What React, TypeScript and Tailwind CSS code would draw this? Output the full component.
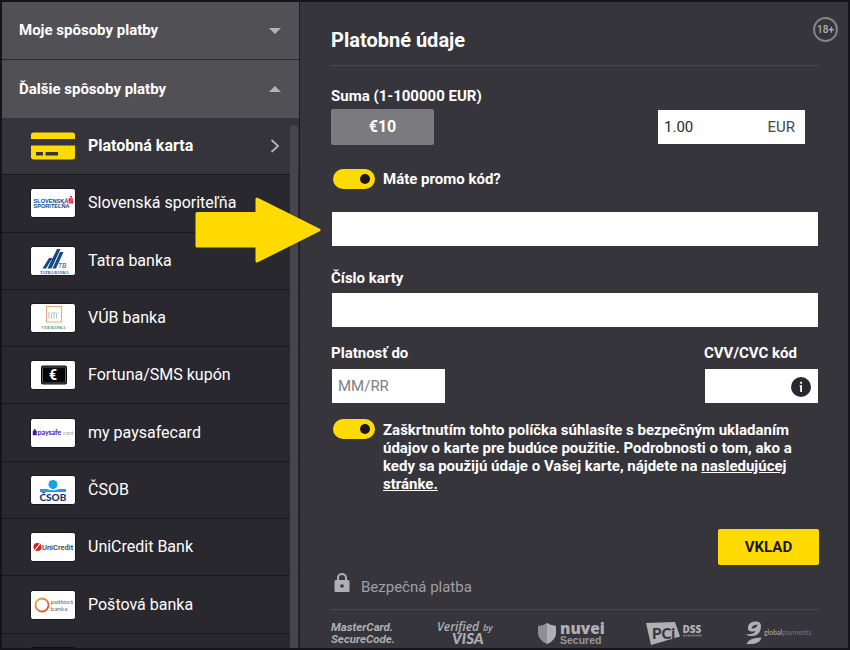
import { useState } from 'react'
import type { ReactNode } from 'react'
import { clsx } from 'clsx'

type Method = {
  id: string
  name: string
  logo: ReactNode
}

const METHODS: Method[] = [
  { id: 'card', name: 'Platobná karta', logo: <CardLogo /> },
  { id: 'slsp', name: 'Slovenská sporiteľňa', logo: <SlspLogo /> },
  { id: 'tatra', name: 'Tatra banka', logo: <TatraLogo /> },
  { id: 'vub', name: 'VÚB banka', logo: <VubLogo /> },
  { id: 'coupon', name: 'Fortuna/SMS kupón', logo: <CouponLogo /> },
  { id: 'paysafe', name: 'my paysafecard', logo: <PaysafeLogo /> },
  { id: 'csob', name: 'ČSOB', logo: <CsobLogo /> },
  { id: 'unicredit', name: 'UniCredit Bank', logo: <UniCreditLogo /> },
  { id: 'postova', name: 'Poštová banka', logo: <PostovaLogo /> },
  { id: 'more', name: '', logo: <EmptyLogo /> },
]

export default function App() {
  return (
    <div className="relative flex h-screen overflow-hidden border-2 border-[#15141a] bg-[#36353b] font-['Roboto','Liberation_Sans',sans-serif] text-white">
      <Sidebar />
      <PaymentForm />
      <Arrow />
    </div>
  )
}

function Sidebar() {
  const [selected, setSelected] = useState('card')

  return (
    <aside className="flex w-[298px] shrink-0 flex-col border-r border-[#1b1a20] bg-[#29282e]">
      <GroupHeader title="Moje spôsoby platby" />
      <GroupHeader title="Ďalšie spôsoby platby" open />
      <div className="relative min-h-0 flex-1 overflow-hidden">
        <ul className="grid min-h-[573px] auto-rows-fr">
          {METHODS.map((m) => (
            <li key={m.id} className="border-b border-[#19181e]">
              <button
                onClick={() => setSelected(m.id)}
                className={clsx(
                  'flex h-full w-full items-center gap-3 pr-[19px] pl-7 text-left text-base',
                  selected === m.id ? 'bg-[#35343a] font-bold' : 'font-normal'
                )}
              >
                {m.logo}
                <span className="flex-1">{m.name}</span>
                {selected === m.id && (
                  <svg viewBox="0 0 10 14" className="h-[14px] w-[10px]" aria-hidden="true">
                    <path d="M1.5 1 8 7l-6.5 6" fill="none" stroke="#b5b4b8" strokeWidth="1.8" />
                  </svg>
                )}
              </button>
            </li>
          ))}
        </ul>
        {/* Scrollbar thumb */}
        <div className="absolute top-[7px] right-px bottom-0 w-2 rounded-t bg-[#46454b]" />
      </div>
    </aside>
  )
}

function GroupHeader({ title, open = false }: { title: string; open?: boolean }) {
  return (
    <button
      aria-expanded={open}
      className={clsx(
        'flex h-[58px] shrink-0 items-center justify-between bg-[#515055] pr-[18px] pl-[17px] text-left text-[15px] font-bold',
        !open && 'border-b border-[#29282e]'
      )}
    >
      {title}
      <svg viewBox="0 0 12 6" className="h-[6px] w-[12px]" aria-hidden="true">
        <path d={open ? 'M0 6 6 0l6 6z' : 'M0 0h12L6 6z'} fill="#b3b2b7" />
      </svg>
    </button>
  )
}

function PaymentForm() {
  return (
    <main className="relative min-w-0 flex-1 pr-[29px] pl-[31px] text-[15px] font-bold">
      <span className="absolute top-[15px] right-[10px] flex size-[25px] items-center justify-center rounded-full border-2 border-[#858489] text-[10px] font-medium text-[#b5b4b8]">
        18+
      </span>

      <h1 className="flex h-16 items-center border-b border-[#4c4b50] pt-3 text-xl">
        Platobné údaje
      </h1>

      <form onSubmit={(e) => e.preventDefault()}>
        <label htmlFor="amount" className="mt-5 block leading-5">
          Suma (1-100000 EUR)
        </label>
        <div className="mt-[3px] flex items-center justify-between pr-[14px]">
          <button type="button" className="h-9 w-[103px] rounded-xs bg-[#7b7a7e] text-base">
            €10
          </button>
          <div className="flex h-[34px] w-[147px] items-center bg-white pr-[10px] font-normal text-[#29282e]">
            <input
              id="amount"
              defaultValue="1.00"
              className="h-full min-w-0 flex-1 px-[6px] outline-none"
            />
            <span className="text-[#46454b]">EUR</span>
          </div>
        </div>

        <div className="mt-6 flex items-center gap-2 pl-[2px]">
          <Toggle id="promo" />
          <label htmlFor="promo" className="leading-5">
            Máte promo kód?
          </label>
        </div>
        <div className="mt-[23px] px-px">
          <TextBox id="promo-code" label="Promo kód" />
        </div>

        <label htmlFor="card-number" className="mt-[22px] block leading-5">
          Číslo karty
        </label>
        <div className="mt-[5px] px-px">
          <TextBox id="card-number" />
        </div>

        <div className="mt-4 flex justify-between pr-px">
          <div className="w-[114px]">
            <label htmlFor="expiry" className="block leading-5">
              Platnosť do
            </label>
            <div className="mt-[6px] pl-px">
              <TextBox id="expiry" placeholder="MM/RR" />
            </div>
          </div>
          <div className="w-[114px]">
            <label htmlFor="cvv" className="block leading-5">
              CVV/CVC kód
            </label>
            <div className="relative mt-[6px] pl-px">
              <TextBox id="cvv" />
              <svg
                viewBox="0 0 20 20"
                className="absolute top-2 right-[7px] size-5"
                aria-hidden="true"
              >
                <circle cx="10" cy="10" r="10" fill="#29282e" />
                <path d="M9.2 4.8H11v2H9.2zM8.6 8.3H11V15H9.200V9.600h-.6z" fill="#fff" />
              </svg>
            </div>
          </div>
        </div>

        <div className="mt-4 flex items-start gap-2 pl-[2px]">
          <Toggle id="consent" />
          <p className="flex-1 pt-[2px] leading-[18px]">
            <label htmlFor="consent">
              Zaškrtnutím tohto políčka súhlasíte s bezpečným ukladaním údajov o karte pre budúce
              použitie. Podrobnosti o tom, ako a kedy sa použijú údaje o Vašej karte, nájdete na{' '}
            </label>
            <a href="#storage" className="underline">
              nasledujúcej stránke.
            </a>
          </p>
        </div>

        <div className="mt-9 flex justify-end">
          <button
            type="submit"
            className="h-9 w-[101px] rounded-xs bg-[#ffdb01] text-[#19181e]"
          >
            VKLAD
          </button>
        </div>
      </form>

      <div className="mt-2 flex h-6 gap-[11px] pl-[3px] font-normal text-[#a09fa4]">
        <svg viewBox="0 0 16 20" className="h-5 w-4" aria-hidden="true">
          <path d="M4 8V5a4 4 0 0 1 8 0v3" fill="none" stroke="#b0afb3" strokeWidth="2" />
          <rect x="0.5" y="7" width="15" height="12" rx="1.5" fill="#b0afb3" />
          <circle cx="8" cy="13" r="1.8" fill="#36353b" />
        </svg>
        <span className="self-end leading-5">Bezpečná platba</span>
      </div>

      <footer className="mt-3 flex justify-between border-t border-[#4c4b50] pt-[10px]">
        <MasterCardMark />
        <VisaMark />
        <NuveiMark />
        <PciMark />
        <GlobalPaymentsMark />
      </footer>
    </main>
  )
}

function TextBox({
  id,
  label,
  placeholder,
}: {
  id: string
  label?: string
  placeholder?: string
}) {
  return (
    <input
      id={id}
      aria-label={label}
      placeholder={placeholder}
      className="block h-[34px] w-full bg-white px-[6px] font-normal text-[#29282e] outline-none placeholder:text-[#808080]"
    />
  )
}

function Toggle({ id }: { id: string }) {
  return (
    <input
      id={id}
      type="checkbox"
      defaultChecked
      className="flex h-5 w-[42px] shrink-0 appearance-none items-center rounded-full bg-[#7b7a7e] px-[5px] after:size-[10px] after:rounded-full after:bg-[#19181e] after:content-[''] checked:justify-end checked:bg-[#ffdb01]"
    />
  )
}

// Yellow pointer towards the promo code field
function Arrow() {
  return (
    <svg
      viewBox="0 0 126 66"
      className="pointer-events-none absolute top-[195px] left-[193px] h-[66px] w-[126px]"
      aria-hidden="true"
    >
      <path
        d="M2 16.500h60V2l62 31L62 64V49H2z"
        fill="#ffdb01"
        stroke="#ffdb01"
        strokeWidth="3"
        strokeLinejoin="round"
      />
    </svg>
  )
}

/* Method logos */

function Tile({ children }: { children?: ReactNode }) {
  return (
    <svg viewBox="0 0 46 30" className="h-[30px] w-[46px] shrink-0" aria-hidden="true">
      <rect x="0.5" y="0.5" width="45" height="29" rx="2.5" fill="#fff" stroke="#19181e" />
      {children}
    </svg>
  )
}

function EmptyLogo() {
  return (
    <svg viewBox="0 0 46 30" className="h-[30px] w-[46px] shrink-0" aria-hidden="true">
      <rect x="1" width="44" height="30" rx="2" fill="#0e0d12" />
    </svg>
  )
}

function CardLogo() {
  return (
    <svg viewBox="0 0 46 30" className="h-[30px] w-[46px] shrink-0" aria-hidden="true">
      <rect x="1" y="1.5" width="44" height="27" rx="2.5" fill="#ffdb01" />
      <path d="M1 8h44v6.500H1z" fill="#35343a" />
      <path d="M6 21h7v3.500H6zM15.500 21H28v3.500H15.500z" fill="#35343a" />
    </svg>
  )
}

function SlspLogo() {
  return (
    <Tile>
      <g fontFamily="Liberation Sans" fontWeight="bold" fill="#16447e">
        <text x="3.5" y="14.5" fontSize="5.6">
          SLOVENSKÁ
        </text>
        <text x="3.5" y="20" fontSize="5.6">
          SPORITEĽŇA
        </text>
      </g>
      <path d="M38.500 10.300H43v1.400h-3v.6h3v3.200h-4.500v-1.200h3v-.6h-3zM40 8h2v1.600h-2z" fill="#e3222c" />
    </Tile>
  )
}

function TatraLogo() {
  return (
    <Tile>
      <path
        d="M12.500 22.500 19 12h3.500L16 22.500zM17.500 22.500 27 3h3.500l-9 19.500zM22.500 22.500 30 6h3.500L26 22.500z"
        fill="#164a84"
      />
      <text x="28" y="22" fontSize="6.500" fontStyle="italic" fontFamily="Liberation Sans" fill="#164a84">
        TB
      </text>
      <text x="10" y="27.500" fontSize="4" fontWeight="bold" fontFamily="Liberation Serif" fill="#164a84">
        TATRA BANKA
      </text>
    </Tile>
  )
}

function VubLogo() {
  return (
    <Tile>
      <rect x="16.5" y="3.5" width="15" height="15.5" fill="none" stroke="#e8a877" />
      <path
        d="M19 15.500V9M21.500 15.500v-5q1.500-2 2.500 0v5M24 10.500q1.500-2 2.500 0v5M28 9v1"
        fill="none"
        stroke="#a3c0b0"
        strokeWidth="0.9"
      />
      <text x="11.5" y="25.5" fontSize="4" fontWeight="bold" fontFamily="Liberation Serif" fill="#3f8a71">
        VÚB BANKA
      </text>
    </Tile>
  )
}

function CouponLogo() {
  return (
    <Tile>
      <rect x="11" y="5.5" width="26" height="19" rx="2" fill="#060606" />
      <rect x="12.5" y="7" width="23" height="16" rx="1" fill="none" stroke="#888" strokeWidth="0.7" />
      <text x="19" y="20" fontSize="14" fontWeight="bold" fontFamily="Roboto" fill="#fff">
        €
      </text>
    </Tile>
  )
}

function PaysafeLogo() {
  return (
    <Tile>
      <path d="M3 13h3.500v4H3zM4 13v-1.500h1.500V13" fill="#3b1aa8" stroke="#3b1aa8" strokeWidth="0.5" />
      <text x="7.5" y="17" fontSize="7" fontWeight="bold" fontFamily="Lato" fill="#3b1aa8">
        paysafe
      </text>
      <text x="33" y="17" fontSize="5.5" fontFamily="Lato" fill="#9a98a8">
        card
      </text>
    </Tile>
  )
}

function CsobLogo() {
  return (
    <Tile>
      <circle cx="23" cy="9.5" r="4.5" fill="#1aa2dc" />
      <path d="M10 14h7q6 2.500 12 0h7v3H10z" fill="#1aa2dc" />
      <text x="9.5" y="26" fontSize="10" fontWeight="900" fontFamily="Lato" fill="#15396e">
        ČSOB
      </text>
    </Tile>
  )
}

function UniCreditLogo() {
  return (
    <Tile>
      <circle cx="7.5" cy="15" r="4" fill="#c9242e" />
      <path d="m5 18 5.500-7" stroke="#fff" strokeWidth="1.2" />
      <text x="12" y="18" fontSize="7.5" fontWeight="500" fontFamily="Roboto" fill="#3a3a3c">
        UniCredit
      </text>
    </Tile>
  )
}

function PostovaLogo() {
  return (
    <Tile>
      <defs>
        <linearGradient id="ring" x1="0" y1="0" x2="1" y2="1">
          <stop offset="0" stopColor="#f5b335" />
          <stop offset="1" stopColor="#d5433a" />
        </linearGradient>
      </defs>
      <circle cx="12" cy="15" r="6.5" fill="none" stroke="url(#ring)" strokeWidth="1.8" />
      <g fontFamily="Lato" fontSize="6.5" fill="#66656b">
        <text x="20.5" y="13.5">
          poštová
        </text>
        <text x="20.5" y="20.5">
          banka
        </text>
      </g>
    </Tile>
  )
}

/* Footer marks */

function MasterCardMark() {
  return (
    <svg viewBox="0 0 64 26" className="h-[26px] w-16 overflow-visible" role="img" aria-label="MasterCard SecureCode">
      <g fontFamily="Roboto" fontSize="11.5" fontWeight="bold" fontStyle="italic" fill="#b0afb3">
        <text x="0" y="11">
          MasterCard.
        </text>
        <text x="0" y="22.5">
          SecureCode.
        </text>
      </g>
    </svg>
  )
}

function VisaMark() {
  return (
    <svg viewBox="0 0 60 26" className="h-[26px] w-[60px] overflow-visible" role="img" aria-label="Verified by VISA">
      <g fontFamily="Open Sans" fontStyle="italic" fill="#b0afb3">
        <text x="0" y="11" fontSize="12" fontWeight="600">
          Verified
        </text>
        <text x="46" y="11" fontSize="9" fontWeight="600">
          by
        </text>
        <text x="15" y="24" fontSize="15" fontWeight="900" fontFamily="Lato">
          VISA
        </text>
      </g>
    </svg>
  )
}

function NuveiMark() {
  return (
    <svg viewBox="0 0 66 26" className="h-[26px] w-[66px] overflow-visible" role="img" aria-label="nuvei Secured">
      <path d="M0 6q5 0 9-3 4 3 9 3v7q0 7-9 11-9-4-9-11z" fill="#8f8e93" />
      <path d="M9 3q4 3 9 3v7q0 7-9 11z" fill="#b0afb3" />
      <text x="22" y="14" fontSize="15.5" fontWeight="800" fontFamily="Open Sans" fill="#b0afb3">
        nuvei
      </text>
      <text x="22" y="24" fontSize="10.5" fontFamily="Liberation Sans" fontWeight="bold" fill="#98979c">
        Secured
      </text>
    </svg>
  )
}

function PciMark() {
  return (
    <svg viewBox="0 0 58 26" className="h-[26px] w-[58px] overflow-visible" role="img" aria-label="PCI DSS">
      <path d="M0 3 29 2l5 14.500L5 25z" fill="#b0afb3" />
      <text x="6" y="18.5" fontSize="15" fontWeight="900" fontFamily="Lato" fill="#36353b">
        PCi
      </text>
      <text x="36.5" y="13" fontSize="10" fontWeight="800" fontFamily="Open Sans" fill="#b0afb3">
        DSS
      </text>
      <path d="M37 15.500h19" stroke="#77767b" strokeWidth="2" strokeDasharray="2 0.5" />
    </svg>
  )
}

function GlobalPaymentsMark() {
  return (
    <svg viewBox="0 0 74 26" className="h-[26px] w-[74px] overflow-visible" role="img" aria-label="globalpayments">
      <path
        d="M3 7q1-5.500 8-5.500 5 0 5 4.500 0 9-8 10-5 .500-7-1.500 7 0 10-3H6Q2.500 11 3 7z"
        fill="#b0afb3"
      />
      <path d="M6.500 8.500q.5-3.500 6-4-.5 4-6 4z" fill="#36353b" />
      <path d="M1.500 24q2-6.500 15-6.500-1 7.500-15 6.500z" fill="#b0afb3" />
      <text x="19" y="15" fontSize="6.8" fontFamily="Lato" fontWeight="bold" fill="#98979c">
        global
        <tspan fontWeight="normal" fill="#77767b">
          payments
        </tspan>
      </text>
    </svg>
  )
}
